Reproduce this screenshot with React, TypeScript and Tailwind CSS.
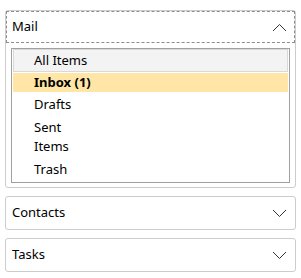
import React from 'react';

const Chevron: React.FC<{ up?: boolean }> = ({ up }) => (
  <svg width="15" height="9" viewBox="0 0 15 9" className="shrink-0">
    <polyline
      points={up ? '1,8 7.5,1.5 14,8' : '1,1 7.5,7.5 14,1'}
      fill="none"
      stroke="#333333"
      strokeWidth="1"
    />
  </svg>
);

const Header: React.FC<{ title: string; open?: boolean; focused?: boolean }> = ({ title, open, focused }) => (
  <div
    className={
      'h-[32px] flex items-center justify-between pl-[5px] pr-[7px] ' +
      (focused ? 'border border-dashed border-[#8c8c8c]' : 'border border-transparent')
    }
  >
    <span>{title}</span>
    <Chevron up={open} />
  </div>
);

export default function App() {
  return (
    <div
      className="pt-[10px] px-[5px] flex flex-col gap-[8px] text-[13px] text-black bg-white"
      style={{ fontFamily: '"Segoe UI", "Noto Sans", sans-serif' }}
    >
      <div className="border border-[#cccccc] rounded-[3px] bg-white">
        <Header title="Mail" open focused />
        <div className="mt-[5px] mb-[4px] mx-[5px] h-[135px] border border-[#a0a0a0] px-px">
          <div className="pl-[20px] leading-[19px] py-[1px] border border-[#d9d9d9] bg-[#f3f3f3]">All Items</div>
          <div className="pl-[21px] leading-[19px] my-[1px] bg-[#ffe6a6] font-bold">Inbox (1)</div>
          <div className="pl-[21px] leading-[19px] py-[2px]">Drafts</div>
          <div className="pl-[21px] leading-[19px] py-[2px]">
            Sent
            <br />
            Items
          </div>
          <div className="pl-[21px] leading-[19px] py-[2px]">Trash</div>
        </div>
      </div>
      <div className="border border-[#cccccc] rounded-[3px] bg-white">
        <Header title="Contacts" />
      </div>
      <div className="border border-[#cccccc] rounded-[3px] bg-white">
        <Header title="Tasks" />
      </div>
    </div>
  );
}
